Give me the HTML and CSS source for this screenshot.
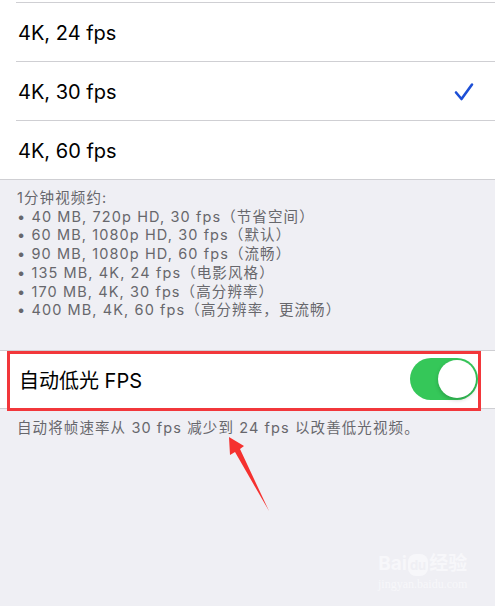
FILE: index.html
```html
<!DOCTYPE html>
<html>
<head>
    <meta charset="UTF-8">
    <meta name="viewport" content="width=device-width, initial-scale=1.0">
    <title>视频录制</title>
    <link rel="stylesheet" href="styles.css">
</head>
<body>
    <!-- Resolution list -->
    <div class="group">
        <div class="row">4K, 24 fps</div>
        <div class="row">
            <span>4K, 30 fps</span>
            <svg class="check" viewBox="0 0 20 20" width="20" height="20">
                <polyline points="2,10.5 7.5,17 18,2.5" fill="none" stroke="#1d4fd6" stroke-width="2.6" stroke-linecap="round" stroke-linejoin="round"/>
            </svg>
        </div>
        <div class="row">4K, 60 fps</div>
    </div>

    <div class="note">
        <p>1分钟视频约:</p>
        <p>• 40 MB, 720p HD, 30 fps（节省空间）</p>
        <p>• 60 MB, 1080p HD, 30 fps（默认）</p>
        <p>• 90 MB, 1080p HD, 60 fps（流畅）</p>
        <p>• 135 MB, 4K, 24 fps（电影风格）</p>
        <p>• 170 MB, 4K, 30 fps（高分辨率）</p>
        <p>• 400 MB, 4K, 60 fps（高分辨率，更流畅）</p>
    </div>

    <!-- Low light toggle -->
    <div class="group toggle-group">
        <div class="toggle-row">
            <span>自动低光 FPS</span>
            <div class="switch on"><div class="knob"></div></div>
        </div>
        <div class="highlight"></div>
    </div>
    <p class="footer">自动将帧速率从 30 fps 减少到 24 fps 以改善低光视频。</p>

    <svg class="arrow" width="495" height="606" viewBox="0 0 495 606">
        <polygon points="229,437 244,446 240,449 269,511 235,452 230,455" fill="#f5312f"/>
    </svg>

    <div class="watermark">
        <div class="wm-logo">Bai<span class="paw">du</span>经验</div>
        <div class="wm-url">jingyan.baidu.com</div>
    </div>
</body>
</html>
```

FILE: styles.css
```css
body {
    margin: 0;
    background: #efeff4;
    font-family: 'Inter', 'Noto Sans CJK SC', sans-serif;
    color: #000;
    width: 495px;
    height: 606px;
    overflow: hidden;
    position: relative;
}
.group {
    background: #fff;
    padding-top: 2px;
    border-bottom: 1px solid #cfcfd3;
}
.row {
    margin-left: 16px;
    border-top: 1px solid #cfcfd3;
    display: flex;
    align-items: center;
    justify-content: space-between;
    padding: 1px 21px 0 2px;
    height: 57px;
    font-size: 20px;
}
.check {
    display: block;
}
.note {
    padding: 9px 17px 30px;
    font-size: 14.5px;
    letter-spacing: 1.1px;
    line-height: 18.7px;
    color: #67676c;
}
.note p {
    margin: 0;
}
.toggle-group {
    padding-top: 0;
    border-top: 1px solid #cfcfd3;
    position: relative;
}
.toggle-row {
    height: 57px;
    display: flex;
    align-items: center;
    justify-content: space-between;
    padding: 0 17px 0 19px;
    font-size: 20px;
}
.switch {
    width: 68px;
    height: 42px;
    border-radius: 21px;
    background: #35c759;
    position: relative;
}
.knob {
    position: absolute;
    right: 2px;
    top: 2px;
    width: 38px;
    height: 38px;
    border-radius: 50%;
    background: #fff;
    box-shadow: 0 2px 4px rgba(0, 0, 0, 0.2);
}
.highlight {
    position: absolute;
    left: 7px;
    top: 0;
    width: 468px;
    height: 54px;
    border: 3px solid #f2373b;
}
.footer {
    margin: 0;
    padding: 10px 17px;
    font-size: 14.5px;
    letter-spacing: 1.1px;
    line-height: 18px;
    color: #67676c;
}
.arrow {
    position: absolute;
    left: 0;
    top: 0;
}
.watermark {
    position: absolute;
    left: 378px;
    top: 553px;
    color: #f7f7fa;
    text-align: center;
}
.wm-logo {
    font-size: 19px;
    font-weight: bold;
    line-height: 22px;
}
.paw {
    display: inline-block;
    background: #f7f7fa;
    color: #efeff4;
    border-radius: 8px;
    font-size: 13px;
    padding: 0 2px;
    margin: 0 1px;
}
.wm-url {
    font-size: 12px;
    font-family: 'Liberation Serif', serif;
    line-height: 16px;
}
```
